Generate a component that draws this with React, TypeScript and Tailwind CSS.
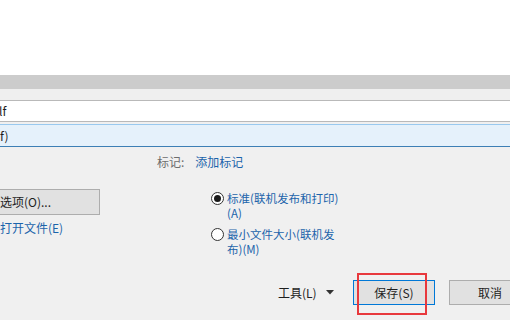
import React from "react";

const font = { fontFamily: '"Noto Sans CJK SC", "Noto Sans", sans-serif' };

function Radio({ checked, lines }: { checked: boolean; lines: string[] }) {
  return (
    <div className="flex items-start">
      <div className="w-[13px] h-[13px] mt-[1px] rounded-full border border-[#333333] bg-white flex items-center justify-center shrink-0">
        {checked && <div className="w-[7px] h-[7px] rounded-full bg-[#1a1a1a]" />}
      </div>
      <div className="ml-[3px] text-[11.5px] leading-[15px] text-[#1c64ab]">
        {lines.map((l, i) => (
          <div key={i} className="whitespace-nowrap">{l}</div>
        ))}
      </div>
    </div>
  );
}

export default function App() {
  return (
    <div className="relative w-[510px] h-[320px] overflow-hidden bg-[#f0f0f0] text-[#1e1e1e]" style={font}>
      <div className="h-[75px] bg-white" />
      <div className="h-[14px] bg-[#cccccc]" />
      <div className="h-[11px] bg-[#efefef]" />
      <div className="h-[22px] bg-white border-y border-[#b9b9b9] flex items-center text-[12px] leading-none pl-0">
        <span className="ml-[-1px]">lf</span>
      </div>
      <div className="h-[2px]" />
      <div className="h-[23px] bg-[#e5f1fb] border-t border-[#99c9ef] border-b border-b-[#3d7fb5] flex items-center text-[12px] leading-none">
        <span>f)</span>
      </div>

      <div className="mt-[7px] h-[16px] flex items-center pl-[157px] text-[12px] leading-[16px]">
        <span className="text-[#6d6d6d]">标记:</span>
        <span className="ml-[11px] text-[#1c64ab]">添加标记</span>
      </div>

      <div className="mt-[19px] flex items-start">
        <div className="w-[211px] shrink-0 flex flex-col items-start">
          <div className="w-[100px] h-[26px] bg-[#e1e1e1] border-y border-r border-[#adadad] flex items-center text-[12px] leading-none">
            <span>选项(O)...</span>
          </div>
          <div className="mt-[5px] h-[16px] text-[12px] leading-[16px] text-[#1c64ab]">打开文件(E)</div>
        </div>
        <div className="pt-[2px] flex flex-col gap-[6px]">
          <Radio checked lines={["标准(联机发布和打印)", "(A)"]} />
          <Radio checked={false} lines={["最小文件大小(联机发", "布)(M)"]} />
        </div>
      </div>

      <div className="mt-[23px] flex items-center w-max pl-[278px]">
        <span className="w-[38px] shrink-0 text-[12px] leading-none whitespace-nowrap">工具(L)</span>
        <svg className="ml-[10px] shrink-0" width="8" height="5" viewBox="0 0 8 5">
          <path d="M0 0 H8 L4 4.5 Z" fill="#333333" />
        </svg>
        <div className="ml-[19px] w-[82px] h-[25px] shrink-0 bg-[#e1e1e1] border border-[#0078d7] flex items-center justify-center text-[12px] leading-none">
          保存(S)
        </div>
        <div className="ml-[14px] w-[82px] h-[25px] shrink-0 bg-[#e1e1e1] border border-[#adadad] flex items-center justify-center text-[12px] leading-none">
          取消
        </div>
      </div>

      <div className="absolute left-[357px] top-[273px] w-[70px] h-[42px] border-2 border-[#e8383d]" />
    </div>
  );
}
